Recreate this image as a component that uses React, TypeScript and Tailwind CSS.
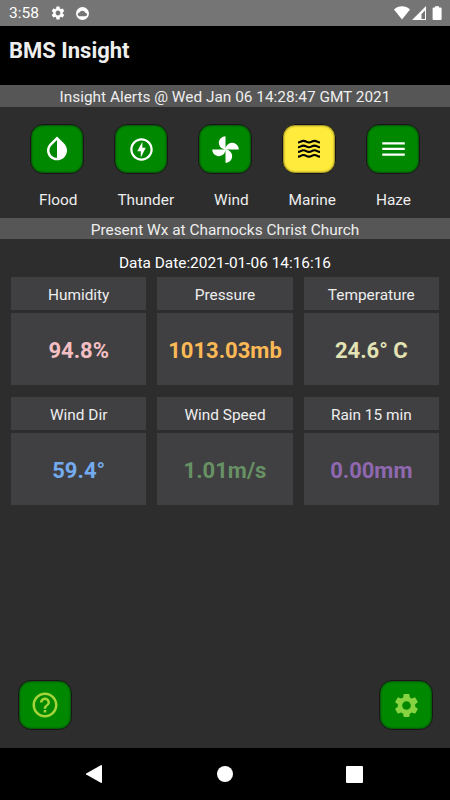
import clsx from "clsx";
import type { ReactNode } from "react";
import { MdDehaze, MdHelpOutline, MdInvertColors, MdOutlineOfflineBolt, MdSettings } from "react-icons/md";

const FanIcon = () => (
  <svg viewBox="0 0 24 24" className="size-[29px]" fill="currentColor">
    <path d="M12 12c0-3 2.5-5.5 5.5-5.5S23 9 23 12H12zm0 0c0 3-2.5 5.5-5.5 5.5S1 15 1 12h11zm0 0c-3 0-5.5-2.5-5.5-5.5S9 1 12 1v11zm0 0c3 0 5.5 2.5 5.5 5.5S15 23 12 23V12z" />
  </svg>
);

const WavesIcon = () => (
  <svg viewBox="0 0 22 20" className="h-5 w-[22px]" fill="none" stroke="currentColor" strokeWidth="2.1">
    {[3.5, 8.2, 12.9, 17.6].map((y) => (
      <path key={y} d={`M0 ${y}c2.8 0 2.7-1.6 5.500-1.600s2.700 1.600 5.500 1.600 2.700-1.600 5.500-1.600 2.700 1.600 5.500 1.600`} />
    ))}
  </svg>
);

const alerts = [
  { label: "Flood", icon: <MdInvertColors className="size-[30px]" />, active: false },
  { label: "Thunder", icon: <MdOutlineOfflineBolt className="size-[27px]" />, active: false },
  { label: "Wind", icon: <FanIcon />, active: false },
  { label: "Marine", icon: <WavesIcon />, active: true },
  { label: "Haze", icon: <MdDehaze className="size-[27px]" />, active: false },
];

const readings = [
  { label: "Humidity", value: "94.8%", color: "text-[#f4bfc3]" },
  { label: "Pressure", value: "1013.03mb", color: "text-[#fdb955]" },
  { label: "Temperature", value: "24.6° C", color: "text-[#e2e2b4]" },
  { label: "Wind Dir", value: "59.4°", color: "text-[#74abee]" },
  { label: "Wind Speed", value: "1.01m/s", color: "text-[#679164]" },
  { label: "Rain 15 min", value: "0.00mm", color: "text-[#8f68b0]" },
];

interface TileButtonProps {
  active?: boolean;
  className?: string;
  label: string;
  children: ReactNode;
}

function TileButton({ active, className, label, children }: TileButtonProps) {
  return (
    <button
      aria-label={label}
      className={clsx(
        "flex h-[50px] w-[54px] items-center justify-center rounded-[13px] border",
        active
          ? "border-[#141418] bg-[#ffeb3b] text-black shadow-[inset_0_0_2px_1px_#8d8220]"
          : "border-[#1b141b] bg-[#008900] shadow-[inset_0_0_2px_1px_#08500a]",
        className
      )}
    >
      {children}
    </button>
  );
}

function StatusBar() {
  return (
    <div className="flex h-[26px] items-center bg-[#757575] pl-[9px] pr-2 text-white">
      <span className="w-[41px] pt-0.5 text-[15.5px] leading-none">3:58</span>
      <MdSettings className="size-4" />
      <svg viewBox="0 0 14 14" className="ml-[10px] size-[13px]">
        <circle cx="7" cy="7" r="7" fill="currentColor" />
        <path d="M4 10a2 2 0 0 1-.2-4A3.3 3.3 0 0 1 10 6.2 1.9 1.9 0 0 1 10 10z" fill="#757575" />
      </svg>
      <svg viewBox="0 0 48 14" className="ml-auto h-[14px] w-12" fill="currentColor">
        <path d="M0 3.5C4.5-.8 11.500-.8 16 3.500L8 13.500z" />
        <path d="M32 0v14H18zM31 4.500 27.500 8v5h3.500z" fillRule="evenodd" />
        <path d="M41 .3h4v1.200h1.700q.9 0 .9.900v10.700q0 .9-.9.900h-7.200q-.9 0-.9-.9V2.400q0-.9.900-.9H41z" />
      </svg>
    </div>
  );
}

function NavBar() {
  return (
    <div className="flex h-[52px] items-center justify-between bg-black pl-[85px] pr-[87px] text-white">
      <svg viewBox="0 0 18 18" className="size-[18px]" fill="currentColor">
        <path d="M16.200 0q.8 0 .8.800v16.400q0 .8-.8.800L1.200 9.600q-.8-.6 0-1.200z" />
      </svg>
      <div className="size-4 rounded-full bg-white" />
      <div className="size-[17px] rounded-[1px] bg-white" />
    </div>
  );
}

export default function App() {
  return (
    <div className="flex h-[800px] w-[450px] flex-col overflow-hidden bg-[#2d2d2d] font-['Roboto',sans-serif] text-[15.4px] leading-[18px] text-[#eeeeee]">
      <StatusBar />
      <h1 className="h-[59px] bg-black pl-[9px] pt-3 text-[22px] font-bold leading-[26px]">BMS Insight</h1>
      <div className="flex h-[22px] items-center justify-center bg-[#565656] pt-0.5">
        Insight Alerts @ Wed Jan 06 14:28:47 GMT 2021
      </div>

      <div className="mt-[17px] flex justify-between px-[30px] text-white">
        {alerts.map((alert) => (
          <TileButton key={alert.label} active={alert.active} label={alert.label}>
            {alert.icon}
          </TileButton>
        ))}
      </div>
      <div className="mt-[17px] flex h-[27px] justify-between px-[39px]">
        {alerts.map((alert) => (
          <span key={alert.label}>{alert.label}</span>
        ))}
      </div>

      <div className="flex h-[21px] items-center justify-center bg-[#565656] pt-0.5">
        Present Wx at Charnocks Christ Church
      </div>
      <div className="mt-[15px] h-[23px] text-center text-white">Data Date:2021-01-06 14:16:16</div>

      <div className="grid grid-cols-3 gap-x-[11px] gap-y-3 px-[11px]">
        {readings.map((reading) => (
          <div key={reading.label} className="flex flex-col gap-[3px]">
            <div className="flex h-[33px] items-center justify-center bg-[#404042] pt-0.5">{reading.label}</div>
            <div
              className={clsx(
                "flex h-[72px] items-center justify-center bg-[#404042] pt-[3px] text-[22px] font-bold",
                reading.color
              )}
            >
              {reading.value}
            </div>
          </div>
        ))}
      </div>

      <div className="mt-auto mb-[18px] flex justify-between pl-[18px] pr-[17px]">
        <TileButton label="Help" className="text-[#a5d43a]">
          <MdHelpOutline className="size-[30px]" />
        </TileButton>
        <TileButton label="Settings" className="text-[#88d342]">
          <MdSettings className="size-[29px]" />
        </TileButton>
      </div>
      <NavBar />
    </div>
  );
}
